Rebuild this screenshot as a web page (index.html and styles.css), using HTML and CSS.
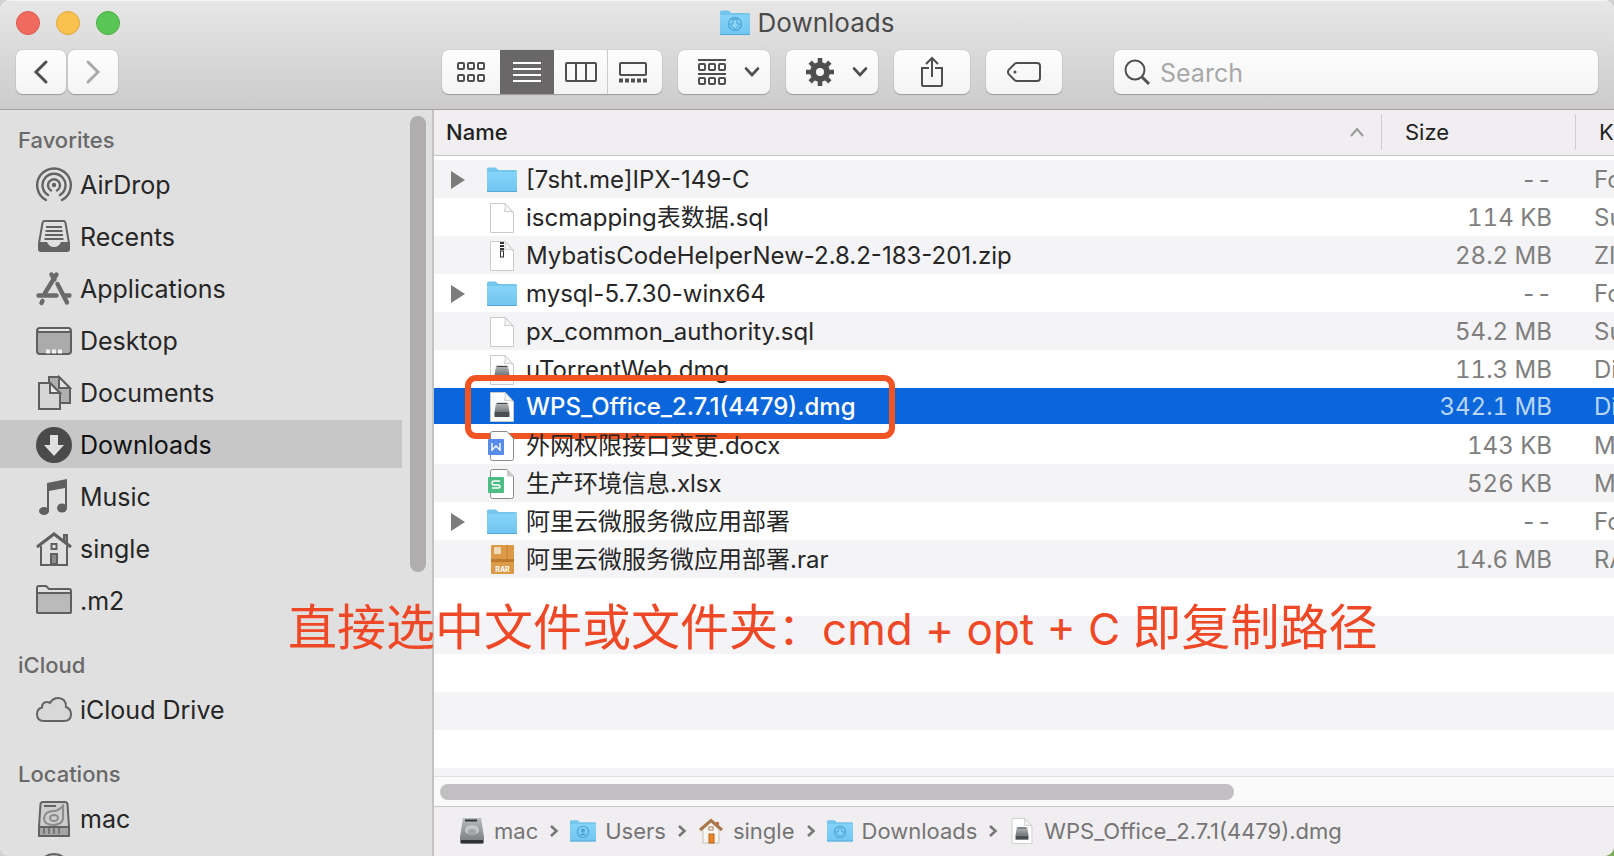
FILE: index.html
```html
<!DOCTYPE html>
<html lang="zh-CN">
<head>
    <meta charset="UTF-8">
    <meta name="viewport" content="width=device-width, initial-scale=1.0">
    <title>Downloads</title>
    <link rel="stylesheet" href="styles.css">
</head>
<body>
    <svg class="defs" width="0" height="0" aria-hidden="true">
        <defs>
            <linearGradient id="blue" x1="0" y1="0" x2="0" y2="1">
                <stop offset="0" stop-color="#86d3f8"/>
                <stop offset="1" stop-color="#70c5f1"/>
            </linearGradient>
            <linearGradient id="steel" x1="0" y1="0" x2="0" y2="1">
                <stop offset="0" stop-color="#b9bdbf"/>
                <stop offset="1" stop-color="#74787a"/>
            </linearGradient>
            <symbol id="folder" viewBox="0 0 30 26">
                <path d="M0 2q0-1.500 1.500-1.500h7l3 2.500h17q1.500 0 1.500 1.500v8H0z" fill="#74c6ec"/>
                <rect y="5" width="30" height="20" rx="1" fill="url(#blue)"/>
                <path d="M0 24.500h30" stroke="#55a9d6"/>
            </symbol>
            <symbol id="folder-down" viewBox="0 0 30 26">
                <use href="#folder"/>
                <circle cx="15" cy="14" r="6.500" fill="none" stroke="#4ba3d3" stroke-width="1.300"/>
                <path d="M13 9.500h4V14h3L15 19l-5-5h3z" fill="#8bd4f7" stroke="#4ba3d3"/>
            </symbol>
            <symbol id="folder-user" viewBox="0 0 30 26">
                <use href="#folder"/>
                <circle cx="15" cy="14" r="6.500" fill="none" stroke="#4ba3d3" stroke-width="1.300"/>
                <circle cx="15" cy="12.500" r="2.300" fill="#4ba3d3"/>
                <path d="M11 18q4-5 8 0z" fill="#4ba3d3"/>
            </symbol>
            <symbol id="page" viewBox="0 0 30 32">
                <path d="M3.500 1.500H18l8.500 9v20h-23z" fill="#fff" stroke="#cacaca"/>
                <path d="M18 1.500q1 4-.5 8 5-1 9 1z" fill="#f7f7f7" stroke="#cacaca"/>
            </symbol>
            <symbol id="zip" viewBox="0 0 30 32">
                <use href="#page"/>
                <path d="M15 2v10" stroke="#333" stroke-width="4" stroke-dasharray="2 1"/>
                <rect x="13.500" y="11" width="3" height="6" fill="#fff" stroke="#333"/>
            </symbol>
            <symbol id="dmg" viewBox="0 0 30 32">
                <use href="#page"/>
                <path d="M9 11.500h12l1.500 9.500h-15z" fill="url(#steel)"/>
                <path d="M10 12.500h10" stroke="#444"/>
                <rect x="7.500" y="21" width="15" height="5" fill="#4b4f51"/>
            </symbol>
            <symbol id="docx" viewBox="0 0 30 32">
                <path d="M5.500 1.500H20l6.500 7v20q0 2-2 2h-19q-2 0-2-2v-25q0-2 2-2z" fill="#fff" stroke="#8b8b8b"/>
                <rect x="1" y="9" width="16" height="16" rx="1" fill="#588ce9"/>
                <path d="M5 13v7l4-4 4 4v-7" fill="none" stroke="#fff" stroke-width="1.400"/>
            </symbol>
            <symbol id="xlsx" viewBox="0 0 30 32">
                <path d="M5.500 1.500H20l6.500 7v20q0 2-2 2h-19q-2 0-2-2v-25q0-2 2-2z" fill="#fff" stroke="#8b8b8b"/>
                <path d="M20 1.500v7h6.500z" fill="#ccc"/>
                <rect x="1" y="9" width="16" height="16" rx="1" fill="#4dbd84"/>
                <path d="M13 13H7q-2 0-2 2t2 2h4q2 0 2 1.500T11 20H5" fill="none" stroke="#fff" stroke-width="1.400"/>
            </symbol>
            <symbol id="rar" viewBox="0 0 30 32">
                <rect x="4" y="1" width="23" height="29" rx="1" fill="#dc9a46"/>
                <rect x="4" y="15" width="23" height="3" fill="#bd7a2c"/>
                <rect x="7" y="3" width="7" height="7" rx="1" fill="#f0d9b8"/>
                <path d="M20 1v14" stroke="#cf8d3c" stroke-width="2"/>
                <text x="15.500" y="27.500" text-anchor="middle" class="rar-text">RAR</text>
            </symbol>
            <symbol id="drive" viewBox="0 0 26 28">
                <path d="M4 1h18l3 19v5q0 2-2 2H3q-2 0-2-2v-5z" fill="url(#steel)"/>
                <path d="M6 3.500h12" stroke="#333" stroke-width="2"/>
                <ellipse cx="13" cy="13" rx="7" ry="5" fill="#c3c7c9"/>
                <ellipse cx="13" cy="15" rx="4" ry="3" fill="#a1a5a7"/>
                <rect x="2" y="23" width="22" height="3" fill="#303234"/>
            </symbol>
            <symbol id="home-color" viewBox="0 0 26 28">
                <path d="M5 12l8-7 8 7v14H5z" fill="#f7f5f2" stroke="#c7c2bd"/>
                <path d="M18 5h3v5l-3-3z" fill="#c56a3a"/>
                <path d="M2 13L13 3.500 24 13" fill="none" stroke="#a9774c" stroke-width="3"/>
                <rect x="11" y="10" width="4" height="3" fill="#fff" stroke="#a9774c"/>
                <rect x="11" y="17" width="5" height="9" fill="#ec8522" stroke="#b26324"/>
            </symbol>
            <symbol id="chevron" viewBox="0 0 10 14">
                <path d="M2 2l5.500 5L2 12" fill="none" stroke="#777" stroke-width="2.600"/>
            </symbol>
            <symbol id="caret" viewBox="0 0 16 12">
                <path d="M2 2.500l6 6.500 6-6.500" fill="none" stroke="#4f4f4f" stroke-width="2.600" stroke-linecap="round"/>
            </symbol>
        </defs>
    </svg>

    <div class="window">
        <header class="titlebar">
            <div class="title-row">
                <div class="lights">
                    <button class="light red" aria-label="Close"></button>
                    <button class="light yellow" aria-label="Minimize"></button>
                    <button class="light green" aria-label="Zoom"></button>
                </div>
                <h1><svg width="30" height="26"><use href="#folder-down"/></svg>Downloads</h1>
            </div>
            <div class="toolbar">
                <div class="nav">
                    <button class="btn" aria-label="Back"><svg width="16" height="26" fill="none" stroke="#4f4f4f" stroke-width="3" stroke-linecap="round"><path d="M13 3L3 13l10 10"/></svg></button>
                    <button class="btn" aria-label="Forward"><svg width="16" height="26" fill="none" stroke="#aaa" stroke-width="3" stroke-linecap="round"><path d="M3 3l10 10L3 23"/></svg></button>
                </div>
                <div class="views">
                    <button aria-label="Icons">
                        <svg width="28" height="22" fill="none" stroke="#4f4f4f" stroke-width="2"><rect x="1" y="2" width="6" height="6" rx="1"/><rect x="11" y="2" width="6" height="6" rx="1"/><rect x="21" y="2" width="6" height="6" rx="1"/><rect x="1" y="14" width="6" height="6" rx="1"/><rect x="11" y="14" width="6" height="6" rx="1"/><rect x="21" y="14" width="6" height="6" rx="1"/></svg>
                    </button>
                    <button class="active" aria-label="List">
                        <svg width="28" height="22" stroke="#fff" stroke-width="2"><path d="M0 2h28M0 8h28M0 14h28M0 20h28"/></svg>
                    </button>
                    <button aria-label="Columns">
                        <svg width="32" height="22" fill="none" stroke="#4f4f4f" stroke-width="2"><rect x="1" y="2" width="30" height="18" rx="1"/><path d="M11 2v18M21 2v18"/></svg>
                    </button>
                    <button class="gallery" aria-label="Gallery">
                        <svg width="28" height="22" fill="none" stroke="#4f4f4f" stroke-width="2"><rect x="1" y="2" width="26" height="12" rx="1"/><path d="M0 19.500h28" stroke-width="4" stroke-dasharray="4 2"/></svg>
                    </button>
                </div>
                <button class="btn menu" aria-label="Group by">
                    <svg width="28" height="28" fill="none" stroke="#4f4f4f" stroke-width="2"><path d="M0 2h28M0 16h28"/><rect x="1" y="6" width="6" height="6" rx="1"/><rect x="11" y="6" width="6" height="6" rx="1"/><rect x="21" y="6" width="6" height="6" rx="1"/><rect x="1" y="20" width="6" height="6" rx="1"/><rect x="11" y="20" width="6" height="6" rx="1"/><rect x="21" y="20" width="6" height="6" rx="1"/></svg>
                    <svg width="16" height="12"><use href="#caret"/></svg>
                </button>
                <button class="btn menu" aria-label="Action">
                    <svg width="28" height="28" viewBox="0 0 28 28" stroke="#4f4f4f"><circle cx="14" cy="14" r="7" fill="none" stroke-width="6"/><path d="M14 0v5M14 23v5M0 14h5M23 14h5M4.100 4.100l3.500 3.500M20.400 20.400l3.500 3.500M4.100 23.900l3.500-3.500M20.400 7.600l3.500-3.500" stroke-width="4.600"/></svg>
                    <svg width="16" height="12"><use href="#caret"/></svg>
                </button>
                <button class="btn wide" aria-label="Share">
                    <svg width="24" height="32" fill="none" stroke="#4f4f4f" stroke-width="2"><path d="M9 12H2v17q0 1 1 1h18q1 0 1-1V12h-7M12 21V2M6 8l6-6 6 6"/></svg>
                </button>
                <button class="btn wide" aria-label="Tags">
                    <svg width="36" height="22" fill="none" stroke="#4f4f4f" stroke-width="2"><path d="M11 2h20q3 0 3 3v12q0 3-3 3H11q-2 0-3-1.500L2.500 13q-1-2 0-4L8 3.500Q9 2 11 2z"/><circle cx="9" cy="11" r="1.500" fill="#4f4f4f" stroke="none"/></svg>
                </button>
                <label class="search">
                    <svg width="28" height="28" fill="none" stroke="#4f4f4f" stroke-width="2"><circle cx="11" cy="12" r="9.500"/><path d="M18 19l7 7" stroke-width="3"/></svg>
                    <input type="text" placeholder="Search" aria-label="Search">
                </label>
            </div>
        </header>

        <div class="body">
            <aside class="sidebar">
                <nav>
                    <h2>Favorites</h2>
                    <a href="#">
                        <svg width="36" height="36" fill="none" stroke="#636363" stroke-width="2.400" stroke-linecap="round"><circle cx="18" cy="18" r="2.200" fill="#636363" stroke="none"/><path d="M15 23.500a6 6 0 1 1 6 0M12 28a11.500 11.500 0 1 1 12 0M10 33a16.800 16.800 0 1 1 16 0"/></svg>
                        AirDrop</a>
                    <a href="#">
                        <svg width="36" height="36" fill="none" stroke="#636363" stroke-width="2"><path d="M8 2h20q1 0 1.500 2L33 24v6q0 2-2 2H5q-2 0-2-2v-6L6.500 4Q7 2 8 2z"/><path d="M10 8h16M9.500 12h17M9 16h18M8.500 20h19"/><path d="M3 23h8q2 5 7 5t7-5h8v7q0 3-3 3H6q-3 0-3-3z" fill="#636363" stroke="none"/></svg>
                        Recents</a>
                    <a href="#">
                        <svg width="36" height="36" fill="none" stroke="#6a6a6a" stroke-width="4.400" stroke-linecap="round"><path d="M20.500 3.500L9 22M2.500 24.500h18M28 24.500h5.500M15.500 3.500l3 5M21.500 13L31 31.500M6.500 30l-1 2"/></svg>
                        Applications</a>
                    <a href="#">
                        <svg width="36" height="36" stroke="#5f5f5f" stroke-width="2"><rect x="1" y="5" width="34" height="26" rx="3" fill="#ababab"/><path d="M2 9h32" stroke="#5f5f5f"/><path d="M3 7h30" stroke="#e8e8e8"/><path d="M10 28.500h18" stroke="#f0f0f0" stroke-width="4" stroke-dasharray="4 2"/></svg>
                        Desktop</a>
                    <a href="#">
                        <svg width="36" height="36" stroke="#5f5f5f" stroke-width="2"><path d="M13 2h10l11 11v15H13z" fill="#b0b0b0"/><path d="M23 2v11h11z" fill="#e2e2e2"/><path d="M3 8h11l10 10v16H3z" fill="#d6d6d6"/><path d="M14 8v10h10z" fill="#ececec"/></svg>
                        Documents</a>
                    <a href="#" class="current">
                        <svg width="36" height="36"><circle cx="18" cy="18" r="18" fill="#4b4b4b"/><path d="M14 8h8v10h6L18 29 8 18h6z" fill="#e0e0e0"/></svg>
                        Downloads</a>
                    <a href="#">
                        <svg width="36" height="36" fill="#5f5f5f"><path d="M11 4l20-4v28h-2V9L13 12v20h-2z"/><ellipse cx="8" cy="32" rx="5" ry="4"/><ellipse cx="26" cy="29" rx="5" ry="4.500"/></svg>
                        Music</a>
                    <a href="#">
                        <svg width="36" height="36" fill="none" stroke="#5f5f5f" stroke-width="2"><path d="M28 4h3v9l-3-3z" fill="#8a8a8a"/><path d="M5 15v19h26V15"/><path d="M1 16L18 3l17 13" stroke-width="3"/><rect x="15.500" y="13" width="5" height="5"/><rect x="15" y="23" width="6" height="10" fill="#8a8a8a"/></svg>
                        single</a>
                    <a href="#">
                        <svg width="36" height="36" fill="none" stroke="#5f5f5f" stroke-width="2"><path d="M1 30V5q0-2 2-2h7l3 3h20q2 0 2 2v21"/><path d="M1 10h34v19q0 1-1 1H2q-1 0-1-1z" fill="#bababa"/></svg>
                        .m2</a>
                    <h2>iCloud</h2>
                    <a href="#">
                        <svg width="36" height="36" fill="#d8d8d8" stroke="#636363" stroke-width="2"><path d="M8 29q-7 0-7-7 0-5 5-6.500Q6 10 11 10q2 0 3 1 3-5 8-5 8 0 8 9 5 2 5 7 0 7-7 7z"/></svg>
                        iCloud Drive</a>
                    <h2>Locations</h2>
                    <a href="#">
                        <svg width="36" height="36" fill="none" stroke="#636363" stroke-width="2"><path d="M7 1h22q2 0 2.500 2L33 26v7q0 2-2 2H5q-2 0-2-2v-7L4.500 3Q5 1 7 1z" fill="#cdcdcd"/><path d="M3 26h30v9H3z" fill="#a5a5a5"/><path d="M8 5h12"/><path d="M27 5v10q1 8-9 9-10 0-10-7 1-7 10-7 4 0 9-5z" stroke="#8c8c8c"/><ellipse cx="18" cy="17" rx="4" ry="3" stroke="#8c8c8c"/><path d="M8 27v6M13 27v6M18 27v6M23 27v6" stroke="#777"/></svg>
                        mac</a>
                    <a href="#" aria-label="Network">
                        <svg width="36" height="36"><circle cx="18" cy="17" r="16" fill="#b5b5b5" stroke="#636363" stroke-width="2"/></svg>
                    </a>
                </nav>
                <div class="scrollbar"></div>
            </aside>

            <main class="main">
                <div class="list">
                    <table>
                        <colgroup>
                            <col>
                            <col class="col-size">
                            <col class="col-kind">
                        </colgroup>
                        <thead>
                            <tr>
                                <th><div class="sorted">Name<svg width="16" height="12" fill="none" stroke="#999" stroke-width="2"><path d="M2 10l6-7 6 7"/></svg></div></th>
                                <th>Size</th>
                                <th>Kind</th>
                            </tr>
                        </thead>
                        <tbody>
                            <tr>
                                <td><div class="file"><button class="expand" aria-label="Expand"></button><svg class="dir"><use href="#folder"/></svg>[7sht.me]IPX-149-C</div></td>
                                <td>--</td><td>Folder</td>
                            </tr>
                            <tr>
                                <td><div class="file"><svg><use href="#page"/></svg>iscmapping表数据.sql</div></td>
                                <td>114 KB</td><td>Sublime</td>
                            </tr>
                            <tr>
                                <td><div class="file"><svg><use href="#zip"/></svg>MybatisCodeHelperNew-2.8.2-183-201.zip</div></td>
                                <td>28.2 MB</td><td>ZIP archive</td>
                            </tr>
                            <tr>
                                <td><div class="file"><button class="expand" aria-label="Expand"></button><svg class="dir"><use href="#folder"/></svg>mysql-5.7.30-winx64</div></td>
                                <td>--</td><td>Folder</td>
                            </tr>
                            <tr>
                                <td><div class="file"><svg><use href="#page"/></svg>px_common_authority.sql</div></td>
                                <td>54.2 MB</td><td>Sublime</td>
                            </tr>
                            <tr>
                                <td><div class="file"><svg><use href="#dmg"/></svg>uTorrentWeb.dmg</div></td>
                                <td>11.3 MB</td><td>Disk Image</td>
                            </tr>
                            <tr class="selected">
                                <td><div class="file"><svg><use href="#dmg"/></svg>WPS_Office_2.7.1(4479).dmg<span class="highlight"></span></div></td>
                                <td>342.1 MB</td><td>Disk Image</td>
                            </tr>
                            <tr>
                                <td><div class="file"><svg><use href="#docx"/></svg>外网权限接口变更.docx</div></td>
                                <td>143 KB</td><td>Microsoft</td>
                            </tr>
                            <tr>
                                <td><div class="file"><svg><use href="#xlsx"/></svg>生产环境信息.xlsx</div></td>
                                <td>526 KB</td><td>Microsoft</td>
                            </tr>
                            <tr>
                                <td><div class="file"><button class="expand" aria-label="Expand"></button><svg class="dir"><use href="#folder"/></svg>阿里云微服务微应用部署</div></td>
                                <td>--</td><td>Folder</td>
                            </tr>
                            <tr>
                                <td><div class="file"><svg><use href="#rar"/></svg>阿里云微服务微应用部署.rar</div></td>
                                <td>14.6 MB</td><td>RAR Archive</td>
                            </tr>
                        </tbody>
                    </table>
                </div>
                <div class="hscroll"><div class="thumb"></div></div>
                <footer class="pathbar">
                    <a href="#"><svg width="26" height="28"><use href="#drive"/></svg>mac</a>
                    <svg class="sep"><use href="#chevron"/></svg>
                    <a href="#"><svg width="26" height="24"><use href="#folder-user"/></svg>Users</a>
                    <svg class="sep"><use href="#chevron"/></svg>
                    <a href="#"><svg width="26" height="28"><use href="#home-color"/></svg>single</a>
                    <svg class="sep"><use href="#chevron"/></svg>
                    <a href="#"><svg width="26" height="24"><use href="#folder-down"/></svg>Downloads</a>
                    <svg class="sep"><use href="#chevron"/></svg>
                    <a href="#"><svg width="26" height="28"><use href="#dmg"/></svg>WPS_Office_2.7.1(4479).dmg</a>
                </footer>
            </main>
        </div>
        <p class="note">直接选中文件或文件夹<span>：cmd + opt + C </span>即复制路径</p>
    </div>
</body>
</html>
```

FILE: styles.css
```css
* {
    box-sizing: border-box;
}
body {
    margin: 0;
    font-family: Inter, "Noto Sans CJK SC", sans-serif;
    background: radial-gradient(circle at bottom right, #7fae5e 0, #7fae5e 12px, #d2d2d2 13px);
}
button {
    padding: 0;
    border: none;
    background: none;
}
a {
    color: inherit;
    text-decoration: none;
}
svg {
    display: block;
    flex: none;
}
.defs {
    position: absolute;
}
.window {
    position: relative;
    display: flex;
    flex-direction: column;
    height: 100vh;
    overflow: hidden;
    border-radius: 10px;
    background: #fff;
}

/* title bar */
.titlebar {
    flex: none;
    height: 110px;
    background: linear-gradient(#e6e7e6, #cdcbcc);
    border-bottom: 1px solid #a3a1a2;
    box-shadow: inset 0 1px #f4f4f4;
}
.title-row {
    display: grid;
    grid-template-columns: 1fr auto 1fr;
    align-items: center;
    height: 46px;
    padding: 0 16px;
}
.lights {
    display: flex;
    gap: 16px;
}
.light {
    width: 24px;
    height: 24px;
    border-radius: 50%;
}
.red {
    background: #f16a5e;
    border: 1px solid #dc5a4e;
}
.yellow {
    background: #fbc14e;
    border: 1px solid #dfa63c;
}
.green {
    background: #58c654;
    border: 1px solid #48ae42;
}
h1 {
    display: flex;
    align-items: center;
    gap: 8px;
    margin: 0;
    font-size: 26px;
    font-weight: 400;
    line-height: 32px;
    color: #4a4a4a;
}
.toolbar {
    display: flex;
    gap: 16px;
    padding: 4px 16px 0;
}
.nav {
    display: flex;
    flex: 0 0 410px;
    gap: 2px;
}
.btn, .views, .search {
    display: flex;
    align-items: center;
    justify-content: center;
    height: 44px;
    border-radius: 7px;
    background: linear-gradient(#fdfdfd, #f5f4f5);
    box-shadow: 0 0 1px #999, 0 1px 1px #999;
}
.nav .btn {
    width: 50px;
}
.views button {
    display: flex;
    align-items: center;
    justify-content: center;
    width: 54px;
    height: 44px;
    border-right: 1px solid #ccc;
}
.views button:first-child {
    width: 58px;
    border-right: none;
}
.views .active {
    background: #696768;
    border-right: none;
}
.views .gallery {
    padding-right: 4px;
    border-right: none;
}
.menu {
    width: 92px;
    gap: 18px;
    padding-left: 10px;
}
.wide {
    width: 76px;
}
.search {
    flex: 1;
    justify-content: flex-start;
    gap: 8px;
    min-width: 0;
    margin-left: 36px;
    padding-left: 10px;
}
.search input {
    flex: 1;
    min-width: 0;
    padding: 2px 0 0;
    border: none;
    outline: none;
    background: none;
    font: 25px Inter, sans-serif;
}
.search input::placeholder {
    color: #a8a8a8;
}

.body {
    display: flex;
    flex: 1;
    min-height: 0;
}

/* sidebar */
.sidebar {
    position: relative;
    flex: 0 0 434px;
    overflow: hidden;
    padding-top: 11px;
    background: #e0e0e0;
    border-right: 2px solid #c4c2c3;
}
.sidebar h2 {
    margin: 22px 0 0 18px;
    font-size: 22px;
    font-weight: 500;
    line-height: 38px;
    color: #696969;
}
.sidebar h2:first-child {
    margin-top: 0;
}
.sidebar a {
    display: flex;
    align-items: center;
    gap: 8px;
    height: 48px;
    margin: 1px 30px 4px 0;
    border-top: 0;
    padding: 2px 0 0 36px;
    font-size: 25px;
    color: #262626;
}
.sidebar a + a {
    margin-top: 4px;
}
.sidebar .current {
    background: #c7c7c7;
    color: #111;
}
.scrollbar {
    position: absolute;
    top: 6px;
    right: 6px;
    width: 16px;
    height: 456px;
    border-radius: 8px;
    background: #afadae;
}

/* file list */
.main {
    display: flex;
    flex: 1;
    flex-direction: column;
    min-width: 0;
}
.list {
    flex: 1;
    min-height: 0;
    overflow: hidden;
    background: linear-gradient(#f4f3f5 50%, #fff 50%) 0 50px / 100% 76px;
    border-bottom: 1px solid #dedede;
}
table {
    width: calc(100% + 161px);
    table-layout: fixed;
    border-collapse: separate;
    border-spacing: 0;
}
.col-size {
    width: 194px;
}
.col-kind {
    width: 200px;
}
th {
    height: 46px;
    padding: 0 0 2px 24px;
    border-bottom: 1px solid #c8c6c7;
    background: linear-gradient(#cfcdce, #cfcdce) 0 4px / 1px 36px no-repeat #f0eef0;
    box-shadow: 0 4px #fff;
    font-size: 22px;
    font-weight: 400;
    text-align: left;
    color: #222;
}
th:first-child {
    padding-left: 12px;
    background: #f0eef0;
    font-weight: 500;
}
.sorted {
    display: flex;
    align-items: center;
    justify-content: space-between;
    padding-right: 16px;
}
tbody::before {
    content: "";
    display: block;
    height: 4px;
}
td {
    height: 38px;
    padding: 2px 0 0 19px;
    font-size: 24px;
    line-height: 30px;
    white-space: nowrap;
    color: #7f7f7f;
}
td:nth-child(2) {
    padding-right: 23px;
    text-align: right;
    font-variant-numeric: tabular-nums;
}
td:first-child {
    padding-left: 53px;
    color: #262626;
}
.file {
    position: relative;
    display: flex;
    align-items: center;
    gap: 9px;
    height: 34px;
}
.file svg {
    width: 30px;
    height: 32px;
}
.file .dir {
    height: 26px;
}
.expand {
    width: 14px;
    height: 18px;
    margin: 0 13px 0 -36px;
    background: #7c7c7c;
    clip-path: polygon(0 0, 100% 50%, 0 100%);
}
.selected td {
    border-bottom: 2px solid #fff;
    background: #0a66da;
    background-clip: padding-box;
    color: #b9d5f6;
}
.selected td:first-child {
    font-weight: 500;
    color: #fff;
}
.highlight {
    position: absolute;
    top: -15px;
    left: -22px;
    width: 430px;
    height: 64px;
    border: 6px solid #f05423;
    border-radius: 11px;
}
.rar-text {
    font: bold 7px Inter, sans-serif;
    fill: #fff;
}
.hscroll {
    flex: none;
    height: 30px;
    padding: 7px 6px;
    background: #fafafa;
    border-bottom: 1px solid #c8c6c7;
}
.thumb {
    width: 68%;
    height: 16px;
    border-radius: 8px;
    background: #c1bfc1;
}
.pathbar {
    display: flex;
    flex: none;
    align-items: center;
    gap: 11px;
    height: 49px;
    padding: 0 0 2px 25px;
    background: #f0eef0;
    font-size: 22px;
    color: #757575;
}
.pathbar a {
    display: flex;
    align-items: center;
    gap: 9px;
}
.sep {
    width: 10px;
    height: 14px;
}

/* red note over the window */
.note {
    position: absolute;
    top: 592px;
    left: 288px;
    margin: 0;
    font-size: 49px;
    line-height: 72px;
    white-space: nowrap;
    color: #ee4826;
}
.note span {
    font-size: 44px;
}
```
